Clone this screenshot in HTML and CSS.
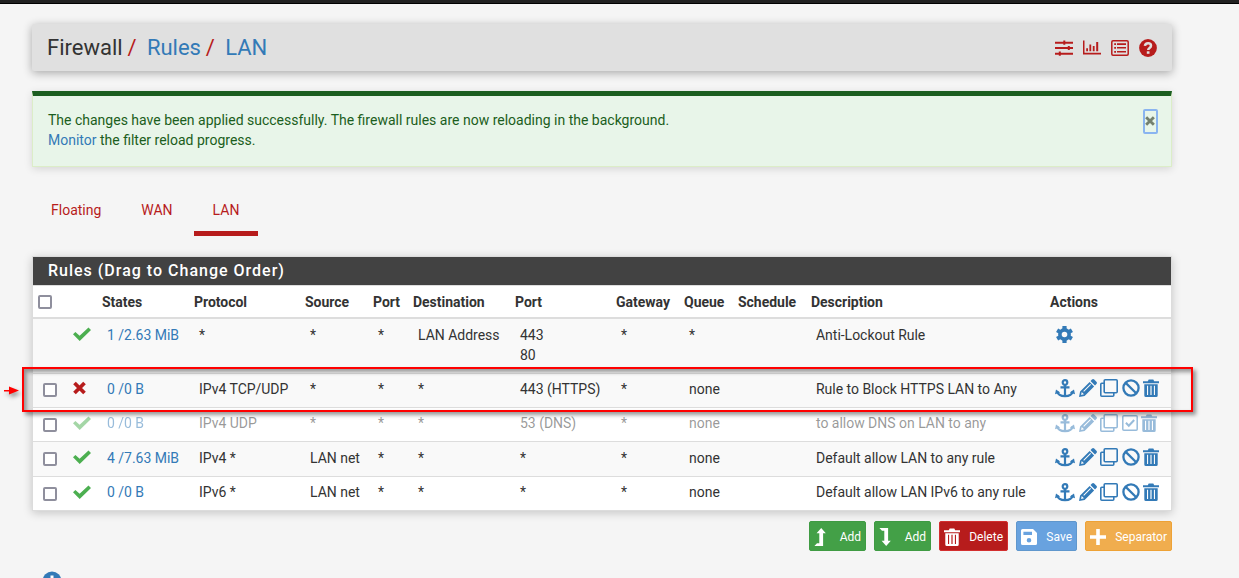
FILE: index.html
```html
<!DOCTYPE html>
<html lang="en">
<head>
<meta charset="utf-8">
<title>Firewall: Rules: LAN</title>
<link rel="stylesheet" href="styles.css">
</head>
<body>
<svg class="defs" aria-hidden="true">
  <symbol id="check" viewBox="0 0 18 14"><path d="M0 7.200 2.400 4.900 6.600 8.700 15.500.600 18 3 6.700 14Z" fill="currentColor"/></symbol>
  <symbol id="cross" viewBox="0 0 14 14"><path d="M1.600 1.600 12.400 12.400M12.400 1.600 1.600 12.400" fill="none" stroke="currentColor" stroke-width="4"/></symbol>
  <symbol id="anchor" viewBox="0 0 20 19"><g fill="none" stroke="currentColor" stroke-width="2.2"><circle cx="10" cy="3.5" r="2.3"/><path d="M10 6v11M5.5 8.3h9M2.3 12.5c.6 3 4 4.6 7.7 4.6s7.1-1.6 7.7-4.6"/></g><path d="M0 15.2 1 10.6 5.2 13.4ZM20 15.2 19 10.6 14.8 13.4Z" fill="currentColor"/></symbol>
  <symbol id="pencil" viewBox="0 0 18 18"><path fill="currentColor" fill-rule="evenodd" d="M0 18 1.1 12.4 10.600 2.900 15.100 7.400 5.6 16.9ZM11.500 2 13 .6q1.1-1 2.2 0L17.4 2.8q1.1 1.1 0 2.2L16 6.500ZM2.7 13 2.1 15.9 5 15.3ZM4.3 12.1 5 12.8 12 5.8 11.3 5.1Z"/></symbol>
  <symbol id="clone" viewBox="0 0 18 18"><g fill="none" stroke="currentColor" stroke-width="1.6"><rect x="4.2" y=".8" width="13" height="13" rx="1"/><path d="M4 4.2H1.8Q.8 4.2.8 5.2v11q0 1 1 1h11q1 0 1-1V14"/></g></symbol>
  <symbol id="ban" viewBox="0 0 18 18"><g fill="none" stroke="currentColor" stroke-width="2.3"><circle cx="9" cy="9" r="7.6"/><path d="m3.7 3.9 10.5 10.3"/></g></symbol>
  <symbol id="tick" viewBox="0 0 16 16"><g fill="none" stroke="currentColor"><rect x=".8" y=".8" width="14.4" height="14.4" rx="1" stroke-width="1.5"/><path d="M3.9 7.8 6.8 10.8 12.2 5" stroke-width="2"/></g></symbol>
  <symbol id="trash" viewBox="0 0 16 18"><path fill="currentColor" fill-rule="evenodd" d="M0 2.2H4.8L5.7.5H10.3L11.2 2.2H16V4.2H0ZM1.3 5.2H14.7V16.5Q14.7 18 13.2 18H2.8Q1.3 18 1.3 16.5ZM4 6.8V16H5.1V6.8ZM7.4 6.8V16H8.6V6.8ZM10.9 6.8V16H12V6.8Z"/></symbol>
  <symbol id="gear" viewBox="0 0 17 17"><circle cx="8.5" cy="8.5" r="4.6" fill="none" stroke="currentColor" stroke-width="3.6"/><path fill="none" stroke="currentColor" stroke-width="4.2" d="M8.5 0v3.6M8.5 13.4V17M1.1 4.25 4.2 6M12.8 11l3.1 1.75M1.1 12.75 4.2 11M12.8 6l3.1-1.75"/></symbol>
  <symbol id="sliders" viewBox="0 0 18 16"><path fill="currentColor" d="M0 1.7h18v2H0zM0 7h18v2H0zM0 12.7h18v2H0zM8.3.5h2v4.2h-2zM12.8 5.9h2v4.2h-2zM3.8 11.5h2v4.2h-2z"/></symbol>
  <symbol id="chart" viewBox="0 0 18 15"><path fill="currentColor" d="M0 .5h1.5v12.3H18v1.6H0zM3.2 8.3h1.8v3H3.2zM6.4 4.4h1.8v6.9H6.4zM9.8 6h1.8v5.3H9.8zM13.2 2h2v9.3h-2z"/></symbol>
  <symbol id="list" viewBox="0 0 18 16"><rect x=".8" y=".8" width="16.4" height="14.4" rx="1.2" fill="none" stroke="currentColor" stroke-width="1.5"/><path fill="currentColor" d="M3.2 3.3h1.8v1.8H3.2zM6 3.3h9v1.6H6zM3.2 7h1.8v1.8H3.2zM6 7h9v1.6H6zM3.2 10.9h1.8v1.8H3.2zM6 11h9v1.6H6z"/></symbol>
  <symbol id="help" viewBox="0 0 18 18"><circle cx="9" cy="9" r="8.9" fill="currentColor"/><path d="M5.9 6.9C6.3 3.2 12 3.4 12 6.7 12 9 9.2 8.8 9.2 11" fill="none" stroke="#e0e0e0" stroke-width="2.5"/><path fill="#e0e0e0" d="M7.8 12.3h2.7v2.5H7.8z"/></symbol>
  <symbol id="up" viewBox="0 0 12 18"><path fill="currentColor" d="M7.2 0 11.8 5.2H9.100V18H.4L3 15.2H5.300V5.2H2.6Z"/></symbol>
  <symbol id="down" viewBox="0 0 12 18"><path fill="currentColor" d="M7.2 18 11.8 12.8H9.100V0H.4L3 2.8H5.300V12.8H2.6Z"/></symbol>
  <symbol id="save" viewBox="0 0 16 16"><path fill="currentColor" fill-rule="evenodd" d="M1.5 0H12L16 4V14.5Q16 16 14.5 16H1.5Q0 16 0 14.5V1.5Q0 0 1.5 0ZM2.4 2.7V6H11V2.7ZM8 9A2.3 2.3 0 1 0 8 13.6 2.3 2.3 0 1 0 8 9Z"/></symbol>
  <symbol id="plus" viewBox="0 0 16 16"><path d="M8 0v16M0 8h16" stroke="currentColor" stroke-width="3.6"/></symbol>
</svg>
<div class="topbar"></div>
<main class="page">
  <header class="crumbs">
    <h1>Firewall<i>/</i><a>Rules</a><i>/</i><a>LAN</a></h1>
    <nav class="tools">
      <svg width="18" height="16"><use href="#sliders"/></svg>
      <svg width="18" height="15"><use href="#chart"/></svg>
      <svg width="18" height="16"><use href="#list"/></svg>
      <svg width="18" height="18"><use href="#help"/></svg>
    </nav>
  </header>
  <section class="alert">
    <p>The changes have been applied successfully. The firewall rules are now reloading in the background.<br><a>Monitor</a> the filter reload progress.</p>
    <button class="close" aria-label="Close"><svg width="10" height="10"><use href="#cross"/></svg></button>
  </section>
  <nav class="tabs"><a>Floating</a><a>WAN</a><a class="active">LAN</a></nav>
  <section class="panel">
    <h2>Rules (Drag to Change Order)</h2>
    <div class="highlight"><svg class="arrow" width="20" height="14" viewBox="0 0 20 14"><path d="M0 6h5V2.5L15 6.5 5 10.5V7.500H0Z" fill="red"/></svg></div>
    <table>
      <colgroup><col class="c-box"><col class="c-act"><col class="c-states"><col class="c-proto"><col class="c-src"><col class="c-sport"><col class="c-dst"><col class="c-dport"><col class="c-gw"><col class="c-queue"><col class="c-sched"><col class="c-desc"><col class="c-icons"></colgroup>
      <thead><tr><th><span class="box"></span></th><th></th><th>States</th><th>Protocol</th><th>Source</th><th>Port</th><th>Destination</th><th>Port</th><th>Gateway</th><th>Queue</th><th>Schedule</th><th>Description</th><th>Actions</th></tr></thead>
      <tbody>
        <tr class="lockout"><td></td><td><svg class="pass" width="18" height="14"><use href="#check"/></svg></td><td><a>1 /2.63 MiB</a></td><td>*</td><td>*</td><td>*</td><td>LAN Address</td><td>443<br>80</td><td>*</td><td>*</td><td></td><td>Anti-Lockout Rule</td><td><div class="icons"><svg width="17" height="17"><use href="#gear"/></svg></div></td></tr>
        <tr><td><span class="box"></span></td><td><svg class="block" width="13" height="14"><use href="#cross"/></svg></td><td><a>0 /0 B</a></td><td>IPv4 TCP/UDP</td><td>*</td><td>*</td><td>*</td><td>443 (HTTPS)</td><td>*</td><td>none</td><td></td><td>Rule to Block HTTPS LAN to Any</td><td><div class="icons"><svg width="20" height="19"><use href="#anchor"/></svg><svg width="18" height="18"><use href="#pencil"/></svg><svg width="18" height="18"><use href="#clone"/></svg><svg width="18" height="18"><use href="#ban"/></svg><svg width="16" height="18"><use href="#trash"/></svg></div></td></tr>
        <tr class="low disabled"><td><span class="box"></span></td><td><svg class="pass" width="18" height="14"><use href="#check"/></svg></td><td><a>0 /0 B</a></td><td>IPv4 UDP</td><td>*</td><td>*</td><td>*</td><td>53 (DNS)</td><td>*</td><td>none</td><td></td><td>to allow DNS on LAN to any</td><td><div class="icons"><svg width="20" height="19"><use href="#anchor"/></svg><svg width="18" height="18"><use href="#pencil"/></svg><svg width="18" height="18"><use href="#clone"/></svg><svg class="tick" width="16" height="16"><use href="#tick"/></svg><svg width="16" height="18"><use href="#trash"/></svg></div></td></tr>
        <tr class="tall"><td><span class="box"></span></td><td><svg class="pass" width="18" height="14"><use href="#check"/></svg></td><td><a>4 /7.63 MiB</a></td><td>IPv4 *</td><td>LAN net</td><td>*</td><td>*</td><td>*</td><td>*</td><td>none</td><td></td><td>Default allow LAN to any rule</td><td><div class="icons"><svg width="20" height="19"><use href="#anchor"/></svg><svg width="18" height="18"><use href="#pencil"/></svg><svg width="18" height="18"><use href="#clone"/></svg><svg width="18" height="18"><use href="#ban"/></svg><svg width="16" height="18"><use href="#trash"/></svg></div></td></tr>
        <tr class="low"><td><span class="box"></span></td><td><svg class="pass" width="18" height="14"><use href="#check"/></svg></td><td><a>0 /0 B</a></td><td>IPv6 *</td><td>LAN net</td><td>*</td><td>*</td><td>*</td><td>*</td><td>none</td><td></td><td>Default allow LAN IPv6 to any rule</td><td><div class="icons"><svg width="20" height="19"><use href="#anchor"/></svg><svg width="18" height="18"><use href="#pencil"/></svg><svg width="18" height="18"><use href="#clone"/></svg><svg width="18" height="18"><use href="#ban"/></svg><svg width="16" height="18"><use href="#trash"/></svg></div></td></tr>
      </tbody>
    </table>
  </section>
  <div class="buttons">
    <button class="btn add"><svg width="12" height="18"><use href="#up"/></svg>Add</button>
    <button class="btn add"><svg width="12" height="18"><use href="#down"/></svg>Add</button>
    <button class="btn delete"><svg width="16" height="18"><use href="#trash"/></svg>Delete</button>
    <button class="btn save"><svg width="16" height="16"><use href="#save"/></svg>Save</button>
    <button class="btn separator"><svg width="16" height="16"><use href="#plus"/></svg>Separator</button>
  </div>
  <div class="info"><svg width="20" height="20" viewBox="0 0 20 20"><circle cx="10" cy="10" r="9.4" fill="currentColor"/><path d="M8.500 4.400h3v2.500h-3zM8 8.500h3.500V15H8z" fill="#fff"/></svg></div>
</main>
</body>
</html>
```
FILE: styles.css
```css
* { box-sizing: border-box; }
body { margin: 0; height: 578px; overflow: hidden; background: #f5f5f5; color: #333; font: 14px/20px Roboto, sans-serif; }
svg { display: block; flex: none; }
a { color: #337ab7; }
.defs { position: absolute; width: 0; height: 0; }
.topbar { height: 4px; background: #212121; border-bottom: 1px solid #000; }
.page { width: 1140px; margin: 20px 0 0 32px; }

.crumbs { display: flex; align-items: center; justify-content: space-between; height: 47px; padding: 0 15px; background: #e0e0e0; border-radius: 2px; box-shadow: 0 2px 10px rgba(0, 0, 0, .32); }
.crumbs h1 { margin: 0; font-size: 22px; line-height: 24px; font-weight: 400; white-space: nowrap; }
.crumbs i { color: #b71c1c; font-style: normal; margin: 0 10.4px 0 4.8px; }
.tools { display: flex; align-items: center; gap: 10px; color: #b71c1c; }

.alert { display: flex; justify-content: space-between; align-items: flex-start; height: 76px; margin-top: 20px; padding: 14px 13px 0 15px; background: #e8f5e9; color: #1b5e20; border: 1px solid #dcedc8; border-top: 5px solid #1b5e20; box-shadow: 0 2px 8px rgba(0, 0, 0, .13); }
.alert p { margin: 0; }
.close { display: flex; align-items: center; justify-content: center; width: 15px; height: 25px; margin-top: -1px; padding: 0 1px 1px 0; border: 2px solid #8ab4f0; border-radius: 2px; background: transparent; color: #74806f; }

.tabs { display: flex; height: 49px; margin-top: 20px; }
.tabs a { height: 49px; padding: 13px 18px 0 19px; margin-right: 3px; color: #b71c1c; }
.tabs .active { width: 64px; border-bottom: 5px solid #b71c1c; }

.panel { position: relative; height: 255px; margin-top: 20px; border: 1px solid #dcdcdc; background: #fff; box-shadow: 0 2px 9px rgba(0, 0, 0, .2); }
.panel h2 { height: 28px; margin: 0; padding: 0 15px; background: #424242; color: #fff; font-size: 16px; line-height: 27px; font-weight: 500; letter-spacing: 1px; }
table { width: 1138px; table-layout: fixed; border-collapse: separate; border-spacing: 0; border-top: 1px solid #ddd; }
th { height: 33px; padding: 0 5px; border-bottom: 2px solid #ddd; text-align: left; font-weight: 700; letter-spacing: -.02px; }
td { height: 34px; padding: 5px 0 0 10px; border-top: 1px solid #ddd; vertical-align: top; white-space: nowrap; letter-spacing: -.02px; }
.lockout td { height: 54px; padding-top: 6px; border-top: 0; }
.tall td { height: 35px; padding-top: 6px; }
tbody tr:nth-child(1), tbody tr:nth-child(2), tbody tr:nth-child(4) { background: #f9f9f9; }
.c-box { width: 30px; } .c-act { width: 34px; } .c-states { width: 92px; } .c-proto { width: 111px; }
.c-src { width: 68px; } .c-sport { width: 40px; } .c-dst { width: 102px; } .c-dport { width: 101px; }
.c-gw { width: 68px; } .c-queue { width: 54px; } .c-sched { width: 73px; } .c-desc { width: 239px; } .c-icons { width: 126px; }
.box { display: block; width: 14px; height: 14px; border: 2px solid #8f8f9d; border-radius: 2px; background: #fff; }
td .box { margin-top: 4px; }
td > svg { margin-top: 2px; }
.pass { color: #4caf50; }
.block { color: #b71c1c; }
.icons { display: flex; gap: 3.5px; align-items: flex-start; height: 19px; color: #337ab7; }
.lockout .icons { padding: 1px 0 0 1px; }
.low .box { margin-top: 5px; }
.low td > svg { margin-top: 3px; }
.low .icons { margin-top: 1px; }
.icons .tick { margin-top: 1px; }
.disabled td { color: rgba(51, 51, 51, .5); }
.disabled a, .disabled td > svg, .disabled .icons { opacity: .5; }

.highlight { position: absolute; z-index: 2; left: -11px; top: 110px; width: 1171px; height: 45px; border: 2px solid red; box-shadow: 3px 3px 4px rgba(0, 0, 0, .4), inset 3px 3px 4px rgba(0, 0, 0, .4); }
.arrow { position: absolute; left: -20px; top: 15px; filter: drop-shadow(2px 3px 2px rgba(0, 0, 0, .4)); }

.buttons { display: flex; justify-content: flex-end; gap: 8px; margin-top: 10px; }
.btn { display: flex; align-items: center; justify-content: space-between; height: 30px; padding: 2px 4px 0; border: 1px solid; border-radius: 2px; color: #fff; font: 12px/18px Roboto, sans-serif; }
.add { width: 57px; background: #43a047; border-color: #3f9b43; }
.delete { width: 69px; background: #b71c1c; border-color: #d32f2f; }
.save { width: 61px; background: #68a2df; border-color: #6097cd; }
.separator { width: 87px; background: #f0ad4e; border-color: #eea236; }
.info { margin: 20px 0 0 10px; color: #337ab7; }
```
